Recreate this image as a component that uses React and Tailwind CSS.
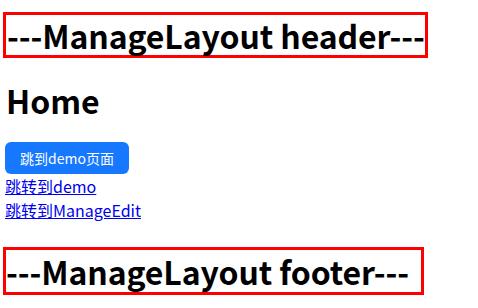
export default function App() {
  return (
    <div className="font-['Noto_Sans_CJK_SC','Noto_Sans',sans-serif] text-black bg-white min-h-[308px]">
      {/* layout header */}
      <div className="pt-3 pl-[3px]">
        <div className="inline-block border-[3px] border-[#ff0000]">
          <h1 className="text-[32px] font-bold leading-[40px] tracking-[-0.1px] pl-px">---ManageLayout header---</h1>
        </div>
      </div>

      {/* page content */}
      <main className="px-[5px] pt-[22px]">
        <h1 className="text-[32px] font-bold leading-[40px] pl-px">Home</h1>
        <div className="pt-[22px]">
          <button className="h-8 px-[15px] rounded-md bg-[#1677ff] text-white text-sm">
            跳到demo页面
          </button>
        </div>
        <div className="text-base leading-6">
          <a href="#" className="block w-fit text-[#0000ee] underline">跳转到demo</a>
          <a href="#" className="block w-fit text-[#0000ee] underline">跳转到ManageEdit</a>
        </div>
      </main>

      {/* layout footer */}
      <div className="pt-[25px] pl-[3px]">
        <div className="inline-block border-[3px] border-[#ff0000]">
          <h1 className="text-[32px] font-bold leading-[42px] tracking-[-0.1px] pr-3">---ManageLayout footer---</h1>
        </div>
      </div>
    </div>
  );
}
